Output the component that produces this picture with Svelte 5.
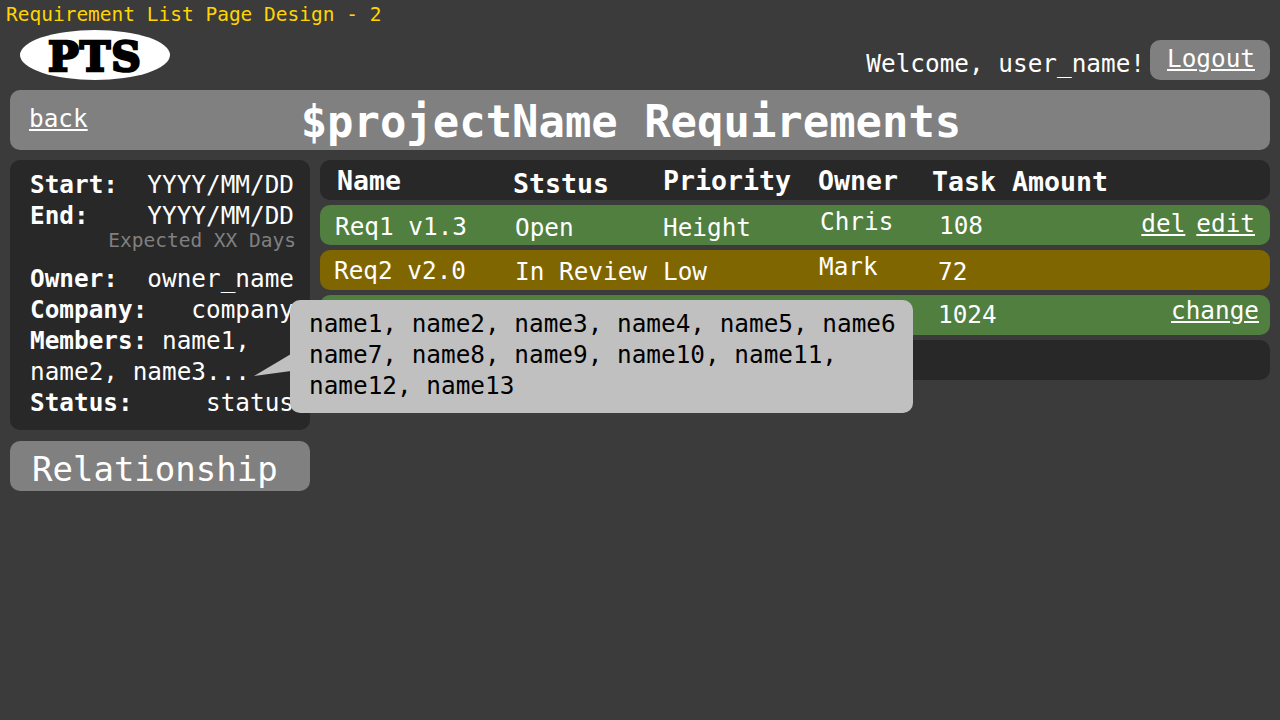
<script>
  const rowLeft = 320;

  // x = left edge of the text on the page, b = baseline inside the row
  const header = [
    { text: 'Name', x: 337, b: 29 },
    { text: 'Ststus', x: 513, b: 32 },
    { text: 'Priority', x: 663, b: 29 },
    { text: 'Owner', x: 818, b: 29 },
    { text: 'Task Amount', x: 932, b: 30 },
  ];

  const rows = [
    {
      tone: 'green',
      cells: [
        { text: 'Req1 v1.3', x: 335, b: 30 },
        { text: 'Open', x: 515, b: 31 },
        { text: 'Height', x: 663, b: 31 },
        { text: 'Chris', x: 820, b: 25 },
        { text: '108', x: 939, b: 29 },
      ],
      actions: ['del', 'edit'],
      right: 15,
      actionTop: 4,
    },
    {
      tone: 'yellow',
      cells: [
        { text: 'Req2 v2.0', x: 334, b: 29 },
        { text: 'In Review', x: 515, b: 30 },
        { text: 'Low', x: 663, b: 30 },
        { text: 'Mark', x: 819, b: 25 },
        { text: '72', x: 938, b: 30 },
      ],
      actions: [],
      right: 15,
      actionTop: 0,
    },
    {
      tone: 'green',
      cells: [{ text: '1024', x: 938, b: 28 }],
      actions: ['change'],
      right: 11,
      actionTop: 1,
    },
    { tone: 'dark', cells: [], actions: [], right: 15, actionTop: 0 },
  ];

  function cellStyle(c, i, all) {
    const next = all[i + 1];
    const width = next ? next.x - c.x : undefined;
    const left = i === 0 ? c.x - rowLeft : 0;
    return `margin-left:${left}px;padding-top:${c.b - 23}px;${width ? `width:${width}px` : ''}`;
  }
</script>

<div class="page">
  <div class="doc-title">Requirement List Page Design - 2</div>

  <header class="top">
    <div class="logo"><span>PTS</span></div>
    <div class="user">
      <span class="welcome">Welcome, user_name!</span>
      <a class="logout" href="#logout">Logout</a>
    </div>
  </header>

  <div class="title-bar">
    <a class="back" href="#back">back</a>
    <h1>$projectName Requirements</h1>
  </div>

  <div class="content">
    <aside class="side">
      <div class="info">
        <div class="line"><b>Start:</b><span>YYYY/MM/DD</span></div>
        <div class="line"><b>End:</b><span>YYYY/MM/DD</span></div>
        <div class="expected">Expected XX Days</div>
        <div class="line"><b>Owner:</b><span>owner_name</span></div>
        <div class="line"><b>Company:</b><span>company</span></div>
        <div class="plain"><b>Members:</b> name1,</div>
        <div class="plain">name2, name3...</div>
        <div class="line"><b>Status:</b><span>status</span></div>
      </div>
      <div class="relationship">Relationship</div>
    </aside>

    <section class="table">
      <div class="row dark head">
        {#each header as c, i}
          <span class="cell" style={cellStyle(c, i, header)}>{c.text}</span>
        {/each}
      </div>
      {#each rows as row}
        <div class="row {row.tone}">
          {#each row.cells as c, i}
            <span class="cell" style={cellStyle(c, i, row.cells)}>{c.text}</span>
          {/each}
          {#if row.actions.length}
            <span class="actions" style="padding-right:{row.right}px;margin-top:{row.actionTop}px">
              {#each row.actions as a}
                <a href="#{a}">{a}</a>
              {/each}
            </span>
          {/if}
        </div>
      {/each}
    </section>

    <div class="popup">
      <svg class="tail" width="37" height="24" viewBox="0 0 37 24"><path d="M37 0 L0 22 L37 17 Z" fill="#c0c0c0" /></svg>
      name1, name2, name3, name4, name5, name6<br />
      name7, name8, name9, name10, name11,<br />
      name12, name13
    </div>
  </div>
</div>

<style>
:global(body) {
  background: #3b3b3b;
}

.page {
  width: 1280px;
  height: 720px;
  padding: 0 10px;
  box-sizing: border-box;
  overflow: hidden;
  color: #fff;
  font-family: "DejaVu Sans Mono", monospace;
  font-size: 24.36px;
  line-height: 31px;
}

a {
  color: #fff;
  text-decoration: underline;
}

.doc-title {
  height: 30px;
  margin-left: -4px;
  color: #ffd500;
  font-size: 19.49px;
  line-height: 29px;
}

.top {
  display: flex;
  justify-content: space-between;
  height: 50px;
  margin-bottom: 10px;
}

.logo {
  width: 150px;
  height: 50px;
  margin-left: 10px;
  border-radius: 50%;
  background: #fff;
  display: flex;
  align-items: center;
  justify-content: center;
  color: #000;
  font-family: "DejaVu Serif", serif;
  font-weight: 700;
  font-size: 41px;
  line-height: 50px;
  letter-spacing: 1px;
  -webkit-text-stroke: 2.5px #000;
}

.logo span {
  padding-top: 3px;
}

.user {
  display: flex;
  align-items: flex-start;
  gap: 5px;
  padding-top: 10px;
}

.welcome {
  padding-top: 8px;
}

.logout {
  width: 120px;
  height: 40px;
  padding-left: 2px;
  box-sizing: border-box;
  border-radius: 10px;
  background: #808080;
  text-align: center;
  line-height: 37px;
}

.title-bar {
  display: flex;
  height: 60px;
  border-radius: 10px;
  background: #808080;
}

.back {
  margin: 13px 0 0 19px;
  height: 31px;
}

h1 {
  margin: 0 0 0 213px;
  font-size: 43.9px;
  font-weight: 700;
  line-height: 63px;
}

.content {
  position: relative;
  display: flex;
  gap: 10px;
  margin-top: 10px;
}

.side {
  flex: 0 0 300px;
}

.info {
  height: 270px;
  box-sizing: border-box;
  padding: 9px 16px 0 20px;
  border-radius: 10px;
  background: #282828;
}

.line {
  display: flex;
  justify-content: space-between;
}

.expected {
  margin: -3px -2px 9px 0;
  height: 26px;
  color: #808080;
  font-size: 19.49px;
  line-height: 26px;
  text-align: right;
}

.plain {
  height: 31px;
}

.relationship {
  height: 50px;
  margin-top: 11px;
  padding-left: 22px;
  border-radius: 10px;
  background: #808080;
  font-size: 34px;
  line-height: 56px;
}

.table {
  flex: 1;
  display: flex;
  flex-direction: column;
  gap: 5px;
}

.row {
  display: flex;
  height: 40px;
  border-radius: 10px;
  line-height: 30px;
}

.head {
  font-size: 26.58px;
  font-weight: 700;
}

.dark {
  background: #282828;
}

.green {
  background: #507f40;
}

.yellow {
  background: #806600;
}

.cell {
  flex: none;
  white-space: pre;
}

.actions {
  margin-left: auto;
  display: flex;
  gap: 11px;
}

.popup {
  position: absolute;
  left: 280px;
  top: 140px;
  width: 623px;
  height: 113px;
  box-sizing: border-box;
  padding: 8px 0 0 19px;
  border-radius: 10px;
  background: #c0c0c0;
  color: #000;
}

.tail {
  position: absolute;
  left: -36px;
  top: 54px;
}
</style>
